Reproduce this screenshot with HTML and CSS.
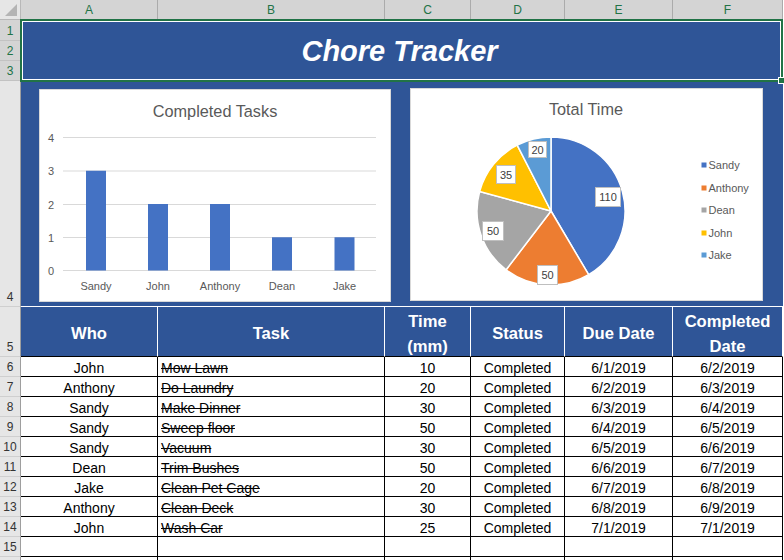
FILE: index.html
```html
<!DOCTYPE html>
<html>
<head>
<meta charset="utf-8">
<title>Chore Tracker</title>
<link rel="stylesheet" href="styles.css">
</head>
<body>
<div class="sheet">
  <div class="corner"><span class="tri"></span></div>
  <div class="colh">A</div>
  <div class="colh">B</div>
  <div class="colh">C</div>
  <div class="colh">D</div>
  <div class="colh">E</div>
  <div class="colh">F</div>

  <div class="rowh sel">1</div>
  <div class="title">Chore Tracker<div class="selection"><span class="handle"></span></div></div>
  <div class="rowh sel">2</div>
  <div class="rowh sel">3</div>

  <div class="rowh">4</div>
  <div class="charts">
    <div class="chart bar">
      <svg viewBox="0 0 350 211" width="350" height="211">
        <text class="ctitle" x="175" y="27" text-anchor="middle">Completed Tasks</text>
        <g class="grid">
          <line x1="23" y1="47.5" x2="336" y2="47.5"/>
          <line x1="23" y1="81" x2="336" y2="81"/>
          <line x1="23" y1="114.5" x2="336" y2="114.5"/>
          <line x1="23" y1="147.5" x2="336" y2="147.5"/>
          <line x1="23" y1="180.5" x2="336" y2="180.5"/>
        </g>
        <g class="ax" text-anchor="end">
          <text x="14" y="51.5">4</text>
          <text x="14" y="85">3</text>
          <text x="14" y="118.5">2</text>
          <text x="14" y="151.5">1</text>
          <text x="14" y="184.5">0</text>
        </g>
        <g fill="#4472C4">
          <rect x="46" y="80.75" width="20" height="99.75"/>
          <rect x="108" y="114" width="20" height="66.5"/>
          <rect x="170" y="114" width="20" height="66.5"/>
          <rect x="232" y="147.25" width="20" height="33.25"/>
          <rect x="294.5" y="147.25" width="20" height="33.25"/>
        </g>
        <g class="ax" text-anchor="middle">
          <text x="56" y="200">Sandy</text>
          <text x="118" y="200">John</text>
          <text x="180" y="200">Anthony</text>
          <text x="242" y="200">Dean</text>
          <text x="304.5" y="200">Jake</text>
        </g>
      </svg>
    </div>
    <div class="chart pie">
      <svg viewBox="0 0 351 211" width="351" height="211">
        <text class="ctitle" x="175" y="26" text-anchor="middle">Total Time</text>
        <g class="slices">
          <path fill="#4472C4" d="M140,122 L140,48 A74,74 0 0 1 177.64,185.71 Z"/>
          <path fill="#ED7D31" d="M140,122 L177.64,185.71 A74,74 0 0 1 95.10,180.82 Z"/>
          <path fill="#A5A5A5" d="M140,122 L95.10,180.82 A74,74 0 0 1 68.62,102.50 Z"/>
          <path fill="#FFC000" d="M140,122 L68.62,102.50 A74,74 0 0 1 106.20,56.17 Z"/>
          <path fill="#5B9BD5" d="M140,122 L106.20,56.17 A74,74 0 0 1 140,48 Z"/>
        </g>
        <g class="lbl">
          <rect x="184.5" y="98.5" width="25" height="19"/>
          <rect x="126.5" y="176.5" width="20" height="19"/>
          <rect x="71.5" y="132.5" width="21" height="19"/>
          <rect x="85.5" y="76.5" width="19" height="18"/>
          <rect x="117.5" y="52.5" width="18" height="16"/>
        </g>
        <g class="lbltxt" text-anchor="middle">
          <text x="197" y="112">110</text>
          <text x="136.5" y="190">50</text>
          <text x="82" y="146">50</text>
          <text x="95" y="89.5">35</text>
          <text x="126.5" y="64.5">20</text>
        </g>
        <g class="legend">
          <rect x="290.5" y="73.5" width="5" height="5" fill="#4472C4"/>
          <rect x="290.5" y="96.5" width="5" height="5" fill="#ED7D31"/>
          <rect x="290.5" y="118.5" width="5" height="5" fill="#A5A5A5"/>
          <rect x="290.5" y="141.5" width="5" height="5" fill="#FFC000"/>
          <rect x="290.5" y="163.5" width="5" height="5" fill="#5B9BD5"/>
          <text x="297.5" y="80">Sandy</text>
          <text x="297.5" y="103">Anthony</text>
          <text x="297.5" y="125">Dean</text>
          <text x="297.5" y="148">John</text>
          <text x="297.5" y="170">Jake</text>
        </g>
      </svg>
    </div>
  </div>

  <div class="rowh">5</div>
  <div class="h">Who</div>
  <div class="h">Task</div>
  <div class="h">Time<br>(mm)</div>
  <div class="h">Status</div>
  <div class="h">Due Date</div>
  <div class="h">Completed<br>Date</div>

  <div class="rowh">6</div>
  <div class="c">John</div><div class="c task">Mow Lawn</div><div class="c">10</div><div class="c">Completed</div><div class="c">6/1/2019</div><div class="c">6/2/2019</div>
  <div class="rowh">7</div>
  <div class="c">Anthony</div><div class="c task">Do Laundry</div><div class="c">20</div><div class="c">Completed</div><div class="c">6/2/2019</div><div class="c">6/3/2019</div>
  <div class="rowh">8</div>
  <div class="c">Sandy</div><div class="c task">Make Dinner</div><div class="c">30</div><div class="c">Completed</div><div class="c">6/3/2019</div><div class="c">6/4/2019</div>
  <div class="rowh">9</div>
  <div class="c">Sandy</div><div class="c task">Sweep floor</div><div class="c">50</div><div class="c">Completed</div><div class="c">6/4/2019</div><div class="c">6/5/2019</div>
  <div class="rowh">10</div>
  <div class="c">Sandy</div><div class="c task">Vacuum</div><div class="c">30</div><div class="c">Completed</div><div class="c">6/5/2019</div><div class="c">6/6/2019</div>
  <div class="rowh">11</div>
  <div class="c">Dean</div><div class="c task">Trim Bushes</div><div class="c">50</div><div class="c">Completed</div><div class="c">6/6/2019</div><div class="c">6/7/2019</div>
  <div class="rowh">12</div>
  <div class="c">Jake</div><div class="c task">Clean Pet Cage</div><div class="c">20</div><div class="c">Completed</div><div class="c">6/7/2019</div><div class="c">6/8/2019</div>
  <div class="rowh">13</div>
  <div class="c">Anthony</div><div class="c task">Clean Deck</div><div class="c">30</div><div class="c">Completed</div><div class="c">6/8/2019</div><div class="c">6/9/2019</div>
  <div class="rowh">14</div>
  <div class="c">John</div><div class="c task">Wash Car</div><div class="c">25</div><div class="c">Completed</div><div class="c">7/1/2019</div><div class="c">7/1/2019</div>
  <div class="rowh">15</div>
  <div class="c"></div><div class="c"></div><div class="c"></div><div class="c"></div><div class="c"></div><div class="c"></div>
  <div class="rowh"></div>
  <div class="c"></div><div class="c"></div><div class="c"></div><div class="c"></div><div class="c"></div><div class="c"></div>
</div>
</body>
</html>
```

FILE: styles.css
```css
html, body {
  margin: 0;
  padding: 0;
  background: #ffffff;
  overflow: hidden;
}
body {
  width: 784px;
  height: 560px;
  font-family: "Liberation Sans", Arial, sans-serif;
}
.sheet {
  display: grid;
  grid-template-columns: 21px 137px 227px 86px 94px 108px 110px;
  grid-template-rows: 20px 21px 20px 20px 226px 50px repeat(11, 20px);
}
.corner {
  position: relative;
  background: #e6e6e6;
  border-right: 1px solid #b8b8b8;
  border-bottom: 1px solid #b8b8b8;
}
.tri {
  position: absolute;
  right: 3px;
  bottom: 3px;
  width: 0;
  height: 0;
  border-left: 12px solid transparent;
  border-bottom: 12px solid #b4b4b4;
}
.colh {
  background: #d4d4d4;
  border-right: 1px solid #ababab;
  border-bottom: 1px solid #ababab;
  color: #217346;
  font-size: 12px;
  display: flex;
  align-items: center;
  justify-content: center;
  padding-top: 1px;
}
.rowh {
  background: #e6e6e6;
  border-right: 1px solid #9e9e9e;
  border-bottom: 1px solid #cfcfcf;
  color: #333333;
  font-size: 12px;
  display: flex;
  align-items: flex-end;
  justify-content: center;
  line-height: 18px;
  padding-bottom: 0;
}
.rowh.sel {
  background: #d4d4d4;
  color: #217346;
  border-bottom-color: #c2c2c2;
}
.title {
  grid-column: 2 / 8;
  grid-row: 2 / 5;
  position: relative;
  background: #2f5597;
  color: #ffffff;
  font-size: 29px;
  font-weight: bold;
  font-style: italic;
  display: flex;
  align-items: center;
  justify-content: center;
  padding-right: 5px;
  padding-top: 1px;
}
.selection {
  position: absolute;
  left: -1px;
  top: -1px;
  right: 0;
  bottom: -1px;
  border: 2px solid #217346;
  box-shadow: inset 0 0 0 1px #ffffff;
}
.handle {
  position: absolute;
  right: -4px;
  bottom: -4px;
  width: 5px;
  height: 5px;
  background: #217346;
  border: 1px solid #ffffff;
}
.charts {
  grid-column: 2 / 8;
  background: #2f5597;
  border-bottom: 1px solid #ffffff;
  display: flex;
  align-items: flex-start;
  gap: 19px;
  padding: 8px 0 0 18px;
}
.chart {
  background: #ffffff;
  border: 1px solid #d9d9d9;
}
.chart svg {
  display: block;
}
.chart.bar {
  width: 350px;
  height: 211px;
}
.chart.pie {
  width: 351px;
  height: 211px;
  margin-top: -1px;
}
.ctitle {
  font-family: "Liberation Sans", Arial, sans-serif;
  font-size: 16.3px;
  fill: #595959;
}
.grid line {
  stroke: #d9d9d9;
  stroke-width: 1;
}
.ax text, .legend text {
  font-family: "Liberation Sans", Arial, sans-serif;
  font-size: 11px;
  fill: #595959;
}
.slices path {
  stroke: #ffffff;
  stroke-width: 1.5;
  stroke-linejoin: round;
}
.lbl rect {
  fill: #ffffff;
  stroke: #bfbfbf;
  stroke-width: 1;
}
.lbltxt text {
  font-family: "Liberation Sans", Arial, sans-serif;
  font-size: 11px;
  fill: #404040;
}
.h {
  background: #2f5597;
  color: #ffffff;
  font-weight: bold;
  font-size: 16.6px;
  line-height: 25px;
  text-align: center;
  border-right: 1px solid #ffffff;
  border-bottom: 1px solid #000000;
  display: flex;
  align-items: center;
  justify-content: center;
  padding-top: 4px;
}
.c {
  border-right: 1px solid #000000;
  border-bottom: 1px solid #000000;
  font-size: 14px;
  color: #000000;
  display: flex;
  align-items: center;
  justify-content: center;
  padding-top: 2px;
  white-space: nowrap;
  overflow: hidden;
}
.c.task {
  justify-content: flex-start;
  padding-left: 3px;
  text-decoration: line-through;
}
```
